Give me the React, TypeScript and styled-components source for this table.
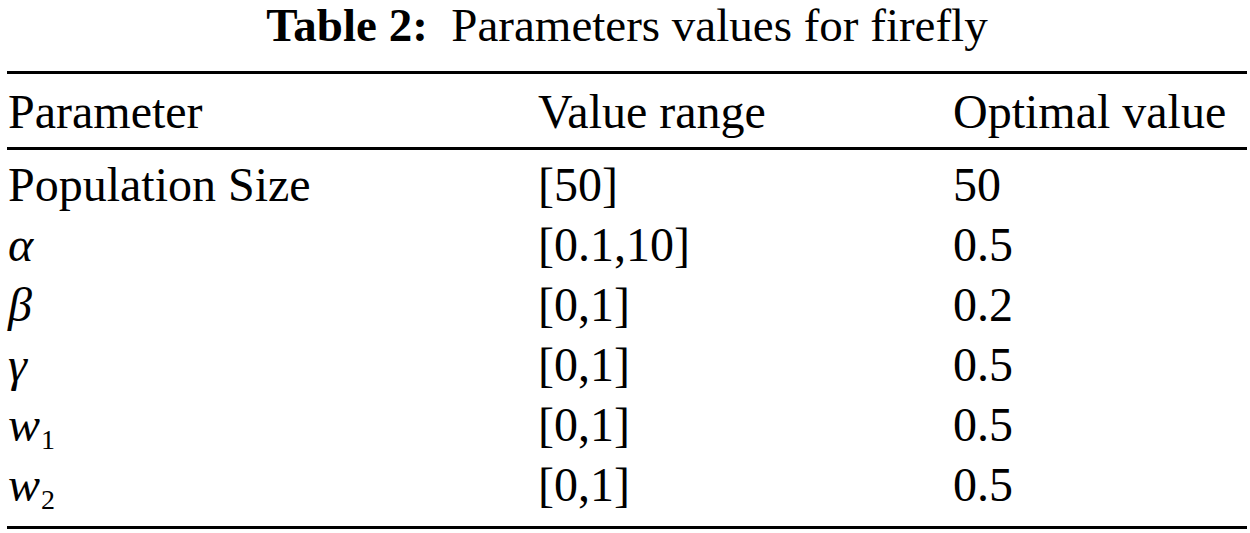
import React from "react";
import styled, { createGlobalStyle } from "styled-components";

const Global = createGlobalStyle`
  html, body { margin: 0; padding: 0; background: #ffffff; }
  body { font-family: "Liberation Serif", "Times New Roman", serif; color: #000; }
`;

const Page = styled.div`
  width: 1250px;
  padding: 0 3px 0 7px;
  box-sizing: border-box;
`;

const Caption = styled.div`
  text-align: center;
  font-size: 47px;
  line-height: 50px;
  height: 48px;
  margin-bottom: 23px;
  white-space: pre;
`;

const CaptionLabel = styled.span`
  font-weight: bold;
`;

const Table = styled.div`
  border-top: 3px solid #000;
  border-bottom: 3px solid #000;
  font-size: 48px;
`;

const Row = styled.div`
  display: grid;
  grid-template-columns: 530px 415px 1fr;
  padding-left: 1px;
  height: 60px;
  line-height: 60px;
  white-space: nowrap;
`;

const Head = styled.div`
  padding: 8px 0 5px;
  border-bottom: 3px solid #000;
`;

const Body = styled.div`
  padding: 5px 0 11px;
`;

const Cell = styled.div``;

const Sym = styled.i`
  font-style: italic;
`;

const Sub = styled.sub`
  font-style: normal;
  font-size: 28px;
  vertical-align: -8px;
  line-height: 0;
  margin-left: 1px;
`;

const rows: [React.ReactNode, string, string][] = [
  ["Population Size", "[50]", "50"],
  [<Sym>α</Sym>, "[0.1,10]", "0.5"],
  [<Sym>β</Sym>, "[0,1]", "0.2"],
  [<Sym>γ</Sym>, "[0,1]", "0.5"],
  [<><Sym>w</Sym><Sub>1</Sub></>, "[0,1]", "0.5"],
  [<><Sym>w</Sym><Sub>2</Sub></>, "[0,1]", "0.5"],
];

export default function App() {
  return (
    <Page>
      <Global />
      <Caption>
        <CaptionLabel>Table 2:</CaptionLabel>{"  Parameters values for firefly"}
      </Caption>
      <Table>
        <Head>
          <Row>
            <Cell>Parameter</Cell>
            <Cell>Value range</Cell>
            <Cell>Optimal value</Cell>
          </Row>
        </Head>
        <Body>
          {rows.map((r, i) => (
            <Row key={i}>
              <Cell>{r[0]}</Cell>
              <Cell>{r[1]}</Cell>
              <Cell>{r[2]}</Cell>
            </Row>
          ))}
        </Body>
      </Table>
    </Page>
  );
}
